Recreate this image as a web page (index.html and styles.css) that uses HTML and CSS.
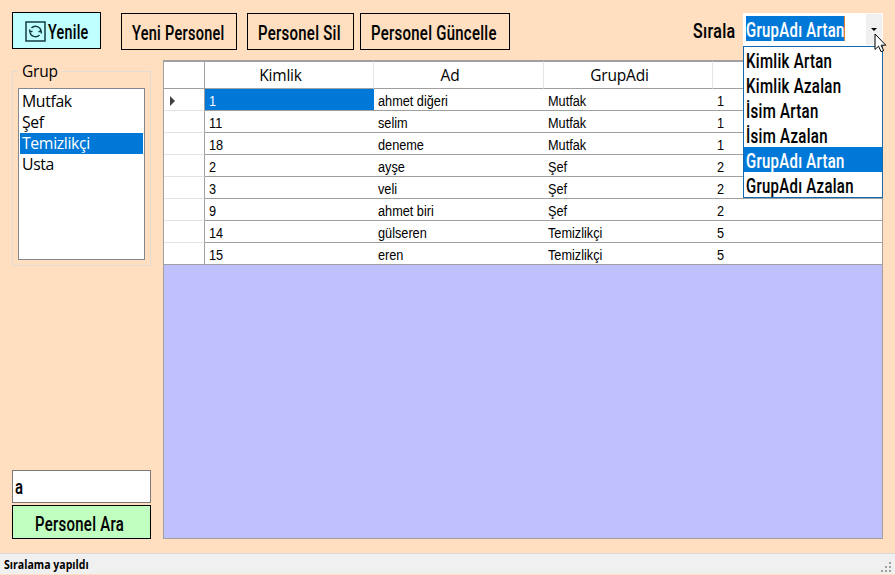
FILE: index.html
```html
<!DOCTYPE html>
<html lang="tr">
<head>
<meta charset="utf-8">
<title>Personel</title>
<link rel="stylesheet" href="styles.css">
</head>
<body>
<div class="app">
  <header class="toolbar">
    <button class="btn refresh"><svg class="refresh-icon" viewBox="0 0 21 21"><rect x="1" y="1" width="19" height="19"/><path d="M4.500 8.500 5 11l2.500-.8M5 10.500A5.500 5.500 0 0 0 14.500 14M16.500 12.500 16 10l-2.500.8M16 10.500A5.500 5.500 0 0 0 6.500 7"/></svg><span class="din">Yenile</span></button>
    <button class="btn new"><span class="din">Yeni Personel</span></button>
    <button class="btn delete"><span class="din">Personel Sil</span></button>
    <button class="btn update"><span class="din">Personel Güncelle</span></button>
    <label class="sort-label"><span class="din">Sırala</span></label>
    <div class="combo">
      <div class="combo-value"><span class="din">GrupAdı Artan</span></div>
      <div class="combo-arrow"></div>
      <ul class="menu">
        <li><span class="din wide">Kimlik Artan</span></li>
        <li><span class="din wide">Kimlik Azalan</span></li>
        <li><span class="din wide">İsim Artan</span></li>
        <li><span class="din wide">İsim Azalan</span></li>
        <li class="selected"><span class="din">GrupAdı Artan</span></li>
        <li><span class="din">GrupAdı Azalan</span></li>
      </ul>
      <svg class="cursor" viewBox="0 0 13 20"><path d="M1 1v15.500l3.500-3.300 2.600 5.500 2.600-1.200-2.600-5.300h4.700z"/></svg>
    </div>
  </header>
  <main class="content">
    <aside class="sidebar">
      <fieldset class="group">
        <legend>Grup</legend>
        <ul class="list">
          <li>Mutfak</li>
          <li>Şef</li>
          <li class="selected">Temizlikçi</li>
          <li>Usta</li>
        </ul>
      </fieldset>
      <div class="search">
        <div class="search-input"><span class="din">a</span></div>
        <button class="btn find"><span class="din">Personel Ara</span></button>
      </div>
    </aside>
    <section class="grid">
      <div class="row head"><div></div><div>Kimlik</div><div>Ad</div><div>GrupAdi</div><div></div></div>
      <div class="row current"><div><i class="marker"></i></div><div><span>1</span></div><div><span>ahmet diğeri</span></div><div><span>Mutfak</span></div><div><span>1</span></div></div>
      <div class="row"><div></div><div><span>11</span></div><div><span>selim</span></div><div><span>Mutfak</span></div><div><span>1</span></div></div>
      <div class="row"><div></div><div><span>18</span></div><div><span>deneme</span></div><div><span>Mutfak</span></div><div><span>1</span></div></div>
      <div class="row"><div></div><div><span>2</span></div><div><span>ayşe</span></div><div><span>Şef</span></div><div><span>2</span></div></div>
      <div class="row"><div></div><div><span>3</span></div><div><span>veli</span></div><div><span>Şef</span></div><div><span>2</span></div></div>
      <div class="row"><div></div><div><span>9</span></div><div><span>ahmet biri</span></div><div><span>Şef</span></div><div><span>2</span></div></div>
      <div class="row"><div></div><div><span>14</span></div><div><span>gülseren</span></div><div><span>Temizlikçi</span></div><div><span>5</span></div></div>
      <div class="row"><div></div><div><span>15</span></div><div><span>eren</span></div><div><span>Temizlikçi</span></div><div><span>5</span></div></div>
    </section>
  </main>
  <footer class="status"><span>Sıralama yapıldı</span><svg class="grip" viewBox="0 0 11 11"><path d="M8 0h2v2H8zM4 4h2v2H4zM8 4h2v2H8zM0 8h2v2H0zM4 8h2v2H4zM8 8h2v2H8z"/></svg></footer>
</div>
</body>
</html>
```
FILE: styles.css
```css
* { box-sizing: border-box; }
body { margin: 0; background: #ffdfc0; color: #000; font: 16px "Open Sans", sans-serif; overflow: hidden; }
ul { list-style: none; margin: 0; padding: 0; }
.app { width: 895px; height: 575px; display: flex; flex-direction: column; padding-bottom: 1px; }

.din { display: inline-block; font: 500 20px/25px Roboto, sans-serif; white-space: nowrap; letter-spacing: .4px; -webkit-text-stroke: .12px currentColor; transform: scaleX(.745); transform-origin: 0 50%; }
.din.wide { transform: scaleX(.75); }

.toolbar { display: flex; align-items: flex-start; height: 60px; padding: 13px 12px 0; flex: none; }
.btn { display: flex; align-items: center; height: 37px; margin: 0; padding: 4px 0 0 10px; border: 1px solid #000; border-radius: 0; background: transparent; color: #000; overflow: hidden; flex: none; }
.refresh { width: 89px; margin: -1px 20px 0 0; padding-left: 12px; background: #c0ffff; }
.refresh .din { transform: scaleX(.715); }
.refresh-icon { width: 21px; height: 21px; margin: -2px 2px 0 0; flex: none; fill: none; stroke: #123c44; stroke-width: 1.5; }
.new { width: 116px; margin-right: 10px; }
.new .din { transform: scaleX(.725); }
.delete { width: 107px; margin-right: 6px; }
.update { width: 150px; }
.sort-label { width: 50px; height: 37px; margin-left: auto; padding-top: 6px; }
.sort-label .din { transform: scaleX(.8); }

.combo { position: relative; display: flex; justify-content: space-between; width: 140px; height: 34px; padding: 1px; background: #fff; flex: none; }
.combo-value { width: 99px; height: 25px; margin: 2px 0 0 2px; background: #0078d7; color: #fff; border-right: 1px solid #e08030; }
.combo-arrow { width: 16px; height: 31px; background: #f0f0f0; display: flex; justify-content: center; padding-top: 14px; }
.combo-arrow::after { content: ""; height: 0; border: 3px solid transparent; border-top-color: #000; border-bottom: 0; }
.menu { position: absolute; z-index: 2; left: 0; top: 33px; width: 140px; height: 152px; background: #fff; border: 1px solid #1269b0; }
.menu li { height: 25px; padding-left: 2px; }
.menu .din, .combo-value .din { line-height: 29px; }
.selected { background: #0078d7; color: #fff; }
.cursor { position: absolute; z-index: 3; left: 131px; top: 20px; width: 13px; height: 20px; fill: #fff; stroke: #000; stroke-width: 1; }

.content { display: flex; flex: 1; padding: 0 12px 14px; gap: 12px; }
.sidebar { display: flex; flex-direction: column; justify-content: space-between; width: 139px; flex: none; }
.group { position: relative; height: 206px; margin: 0; padding: 6px 5px 0; border: 1px solid #e2dcd4; line-height: 22px; }
.group legend { padding: 0 4px; font-size: 15.5px; letter-spacing: -.2px; }
.list { height: 172px; padding: 2px 1px; background: #fff; border: 1px solid #828790; }
.list li { height: 21px; padding-left: 2px; line-height: 21px; font-size: 15.8px; letter-spacing: -.35px; }
.search-input { height: 33px; margin-bottom: 2px; padding: 4px 0 0 2px; border: 1px solid #7a7a7a; background: #fff; }
.find { width: 139px; height: 34px; padding: 4px 0 0 22px; background: #c0ffc0; }

.grid { flex: 1; border: 1px solid #a0a0a0; background: #c0c0ff; }
.row { display: grid; grid-template: 22px / 41px 169px 170px 169px 1fr; background: #fff; }
.row > div { border-bottom: 1px solid #a0a0a0; padding-left: 4px; font: 15.5px/23px "Liberation Sans", sans-serif; white-space: nowrap; }
.row > div:first-child { border-right: 1px solid #a0a0a0; border-bottom-color: #e3e3e3; padding-left: 6px; }
.row > div > span { display: inline-block; transform: scaleX(.82); transform-origin: 0 50%; }
.row.head { grid-template-rows: 28px; }
.row.head > div { padding: 0 17px 0 0; border-top: 1px solid #a0a0a0; border-right: 1px solid #e5e5e5; text-align: center; font: 15.5px/27px "Open Sans", sans-serif; letter-spacing: -.2px; }
.row.head > div:first-child { border-color: #a0a0a0; }
.row.head > div:last-child { border-right: 0; }
.row:last-child > div:first-child { border-bottom-color: #a0a0a0; }
.current > div:nth-child(2) { background: #0078d7; color: #fff; }
.marker { display: block; width: 0; height: 0; margin-top: 7px; border: 5px solid transparent; border-left-color: #404040; border-right: 0; }

.status { display: flex; justify-content: space-between; align-items: flex-start; height: 21px; padding: 0 3px 0 4px; border-top: 1px solid #d9d9d9; background: #f0f0f0; font: 700 12px/22px "Open Sans", sans-serif; flex: none; }
.status span { transform: scaleX(.88); transform-origin: 0 50%; }
.grip { width: 11px; height: 11px; margin-top: 8px; fill: #a0a0a0; }
```
